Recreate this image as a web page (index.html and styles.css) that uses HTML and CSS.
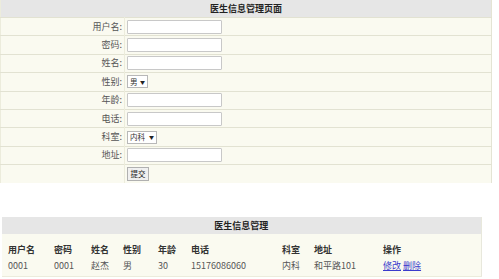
FILE: index.html
```html
<!DOCTYPE html>
<html lang="zh">
<head>
<meta charset="utf-8">
<title>医生信息管理页面</title>
<link rel="stylesheet" href="styles.css">
</head>
<body>
<table class="form-table">
  <colgroup><col class="c-label"><col></colgroup>
  <tr><th colspan="2" class="title">医生信息管理页面</th></tr>
  <tr><td class="lbl">用户名:</td><td class="fld"><input type="text" class="txt"></td></tr>
  <tr><td class="lbl">密码:</td><td class="fld"><input type="text" class="txt"></td></tr>
  <tr><td class="lbl">姓名:</td><td class="fld"><input type="text" class="txt"></td></tr>
  <tr><td class="lbl">性别:</td><td class="fld"><span class="sel sel-sex">男<span class="arr">▼</span></span></td></tr>
  <tr><td class="lbl">年龄:</td><td class="fld"><input type="text" class="txt"></td></tr>
  <tr><td class="lbl">电话:</td><td class="fld"><input type="text" class="txt"></td></tr>
  <tr><td class="lbl">科室:</td><td class="fld"><span class="sel sel-dept">内科<span class="arr">▼</span></span></td></tr>
  <tr><td class="lbl">地址:</td><td class="fld"><input type="text" class="txt"></td></tr>
  <tr><td class="lbl"></td><td class="fld"><span class="btn">提交</span></td></tr>
</table>

<div class="list-wrap">
<table class="list-table">
  <colgroup>
    <col class="w46"><col class="w37"><col class="w32"><col class="w35"><col class="w33"><col class="w91"><col class="w32"><col class="w69"><col class="w104">
  </colgroup>
  <tr><th colspan="9" class="title">医生信息管理</th></tr>
  <tr class="head">
    <th>用户名</th><th>密码</th><th>姓名</th><th>性别</th><th>年龄</th><th>电话</th><th>科室</th><th>地址</th><th>操作</th>
  </tr>
  <tr class="data">
    <td>0001</td><td>0001</td><td>赵杰</td><td>男</td><td>30</td><td>15176086060</td><td>内科</td><td>和平路101</td><td><a href="#">修改</a> <a href="#">删除</a></td>
  </tr>
</table>
</div>
</body>
</html>
```

FILE: styles.css
```css
html, body {
  margin: 0;
  padding: 0;
  background: #ffffff;
}
body {
  font-family: "Noto Sans CJK SC", "Noto Sans", sans-serif;
  font-size: 9px;
  color: #333333;
}
table {
  border-collapse: collapse;
  table-layout: fixed;
}
.form-table {
  width: 492px;
  background: #fafaf0;
  border-right: 1px solid #e4e4d4;
  border-left: 1px solid #ececdc;
}
.c-label { width: 124px; }
.title {
  background: #e6e6e6;
  height: 17px;
  padding: 0;
  font-weight: bold;
  color: #222222;
  text-align: center;
  font-size: 9px;
  line-height: 17px;
}
.form-table td {
  height: 17.4px;
  padding: 0;
  border-top: 1px solid #e2e2d2;
  line-height: 12px;
}
.lbl {
  text-align: right;
  padding-right: 2px !important;
  border-right: 1px solid #ececdc;
  color: #555555;
}
.fld {
  padding-left: 2px !important;
}
.txt {
  display: block;
  box-sizing: border-box;
  width: 95px;
  height: 14px;
  margin: 0;
  padding: 0;
  border: 1px solid #c8c8c8;
  background: #ffffff;
  border-radius: 1px;
}
.sel {
  display: inline-flex;
  align-items: center;
  box-sizing: border-box;
  height: 13px;
  padding: 0 2px 0 2px;
  border: 1px solid #b8b8b8;
  background: #ffffff;
  font-size: 7.5px;
  color: #333333;
  vertical-align: middle;
}
.sel-sex { width: 21px; }
.sel-dept { width: 30px; }
.arr {
  margin-left: auto;
  font-size: 5px;
  color: #222222;
}
.btn {
  display: inline-flex;
  align-items: center;
  justify-content: center;
  box-sizing: border-box;
  width: 22px;
  height: 14px;
  border: 1px solid #b0b0b0;
  background: #f0f0f0;
  font-size: 7.5px;
  color: #222222;
  vertical-align: middle;
}

.list-wrap {
  width: 480px;
  margin: 34px 0 0 2px;
}
.list-table {
  width: 479px;
  background: #fafaf0;
  border-right: 1px solid #e8e8dc;
}
.w46 { width: 46px; }
.w37 { width: 37px; }
.w32 { width: 32px; }
.w35 { width: 35px; }
.w33 { width: 33px; }
.w91 { width: 91px; }
.w69 { width: 69px; }
.w104 { width: 104px; }
.list-table .head th,
.list-table .data td {
  text-align: left;
  padding: 0 0 0 6px;
  white-space: nowrap;
  overflow: hidden;
}
.list-table .head th {
  height: 16px;
  padding-top: 8px;
  font-weight: bold;
  color: #333333;
  line-height: 16px;
}
.list-table .data td {
  height: 16px;
  line-height: 16px;
  padding-bottom: 2px;
  color: #555555;
  border-bottom: 1px solid #ececdc;
}
.list-table a {
  color: #3b3bcc;
  text-decoration: underline;
}
```
